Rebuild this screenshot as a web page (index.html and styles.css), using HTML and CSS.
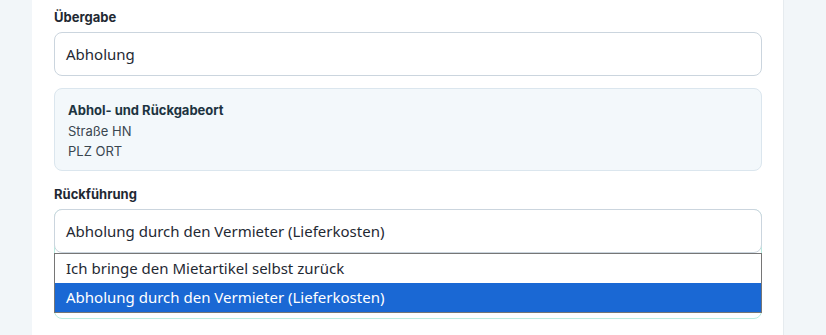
FILE: index.html
```html
<!DOCTYPE html>
<html lang="de">
<head>
<meta charset="utf-8">
<link rel="stylesheet" href="styles.css">
</head>
<body>
<div class="page">
  <div class="card">
    <div class="field">
      <div class="label">Übergabe</div>
      <div class="select">Abholung</div>
    </div>
    <div class="info">
      <div class="info-title">Abhol- und Rückgabeort</div>
      <div class="info-line">Straße HN</div>
      <div class="info-line">PLZ ORT</div>
    </div>
    <div class="field field-2">
      <div class="label">Rückführung</div>
      <div class="select-wrap">
        <div class="select">Abholung durch den Vermieter (Lieferkosten)</div>
        <div class="under"></div>
        <ul class="dropdown">
          <li class="opt">Ich bringe den Mietartikel selbst zurück</li>
          <li class="opt opt-active">Abholung durch den Vermieter (Lieferkosten)</li>
        </ul>
      </div>
    </div>
  </div>
</div>
</body>
</html>
```

FILE: styles.css
```css
* { box-sizing: border-box; }
html, body { margin: 0; padding: 0; }
body {
  width: 826px;
  height: 335px;
  overflow: hidden;
  background: #f2f6f9;
  font-family: Inter, "Noto Sans", sans-serif;
}
.page {
  display: flex;
  height: 335px;
  padding-left: 32px;
}
.card {
  width: 752px;
  height: 335px;
  background: #ffffff;
  border-right: 1px solid #e6ebef;
  padding: 8px 21px 0 22px;
}
.label {
  font-size: 13px;
  font-weight: 700;
  color: #1f2933;
  line-height: 18px;
  height: 18px;
}
.select {
  margin-top: 6px;
  height: 44px;
  border: 1px solid #cbd5de;
  border-radius: 8px;
  background: #fff;
  padding: 0 11px;
  font-family: "Noto Sans", sans-serif;
  font-size: 15px;
  color: #1f2933;
  line-height: 42px;
  white-space: nowrap;
  position: relative;
}
.info {
  margin-top: 12px;
  height: 83px;
  border: 1px solid #dbe6ee;
  border-radius: 8px;
  background: #f3f8fb;
  padding: 11px 13px;
}
.info-title {
  font-size: 13px;
  font-weight: 700;
  color: #1d3441;
  line-height: 20px;
  margin-bottom: 1px;
}
.info-line {
  font-size: 13px;
  color: #3a4650;
  line-height: 20px;
}
.field-2 { margin-top: 14px; }
.select-wrap { position: relative; }
.under {
  height: 110px;
  margin-top: -44px;
  border: 1px solid #b9ece0;
  border-radius: 8px;
}
.dropdown {
  position: absolute;
  left: 0;
  right: 0;
  top: 44px;
  margin: 0;
  padding: 0;
  list-style: none;
  background: #fff;
  border: 1px solid #767676;
  font-family: "Noto Sans", sans-serif;
  font-size: 15px;
}
.opt {
  height: 29px;
  line-height: 29px;
  padding: 0 11px;
  color: #1f2933;
  white-space: nowrap;
}
.opt-active {
  background: #1a68d4;
  color: #ffffff;
}
```
